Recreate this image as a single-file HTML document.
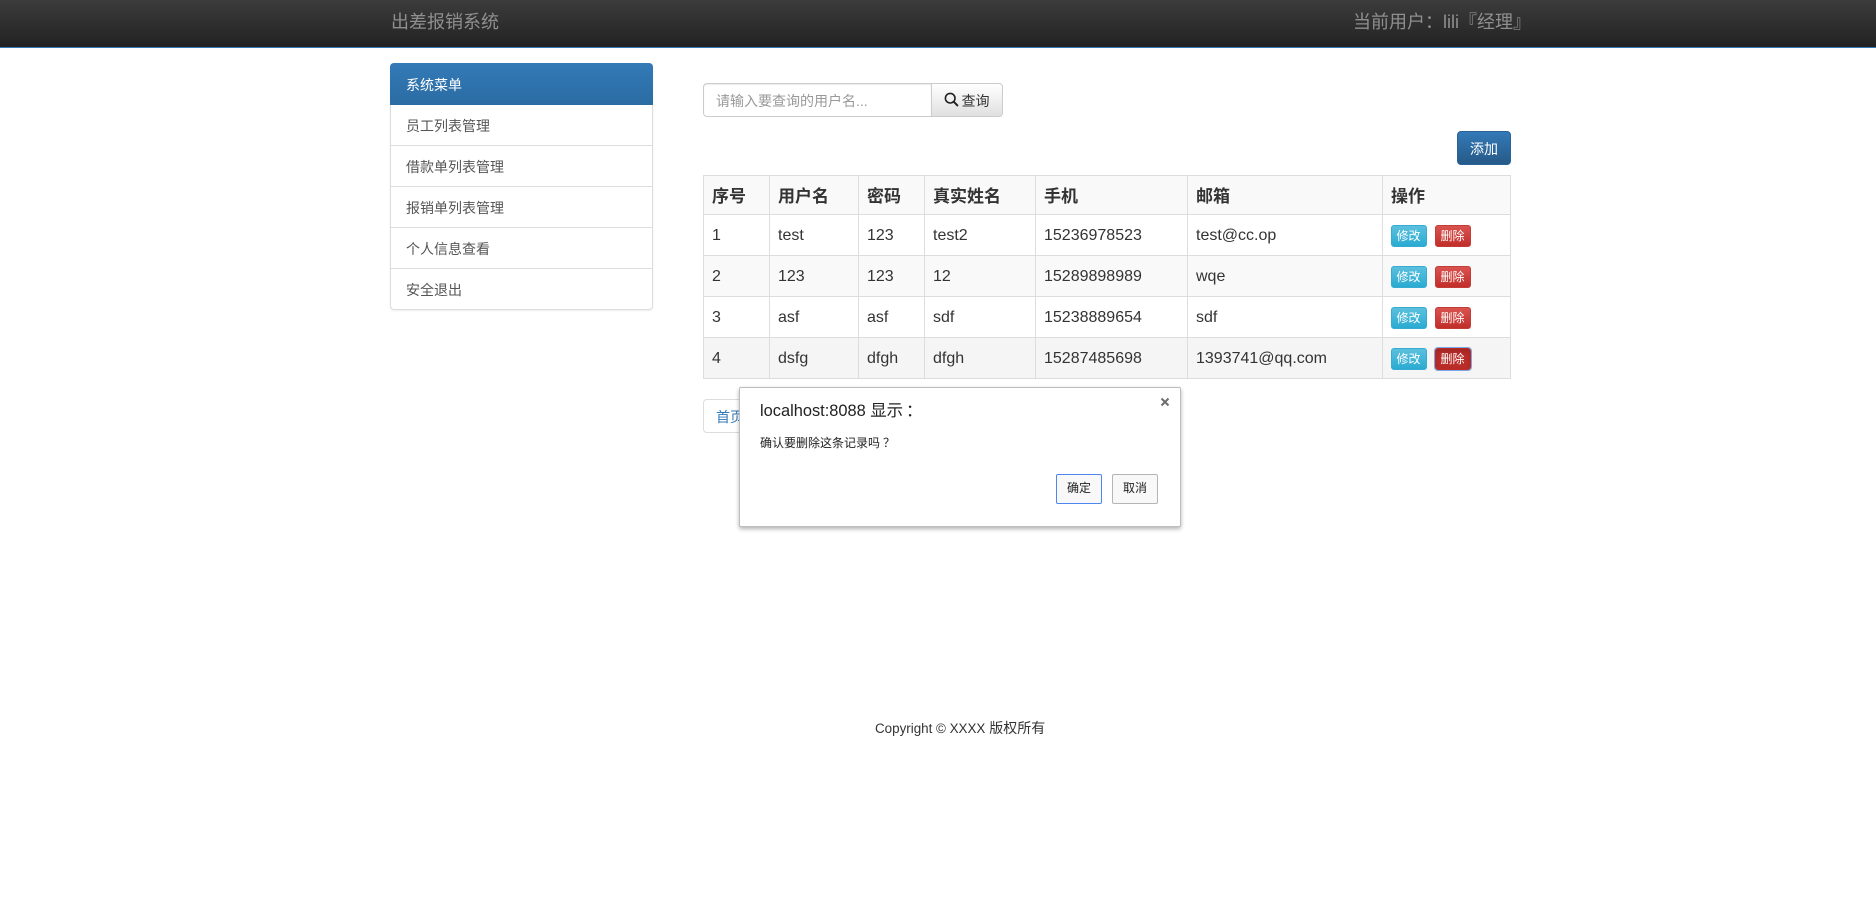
<!DOCTYPE html>
<html lang="zh-CN">
<head>
<meta charset="utf-8">
<title>出差报销系统</title>
<style>
*{box-sizing:border-box}
html,body{margin:0;padding:0;width:1876px;height:906px;overflow:hidden;background:#fff}
body{position:relative;font-family:"Liberation Sans","WenQuanYi Zen Hei","Noto Sans CJK SC",sans-serif;color:#333;font-size:14px}
.abs{position:absolute;white-space:nowrap}
.tc{font-family:"Noto Sans CJK TC",sans-serif;line-height:1}
#nav{position:absolute;left:0;top:0;width:1876px;height:48px;background:linear-gradient(to bottom,#3c3c3c,#222);border-bottom:1px solid #337ab7}
#nav span.x{position:absolute;top:0;line-height:44px;color:#8f8f8f;white-space:nowrap;font-size:18px}
#panel{position:absolute;left:390px;top:63px;width:263px;height:247px;border:1px solid #ddd;border-radius:4px;box-shadow:0 1px 2px rgba(0,0,0,.075);background:#fff}
#panel .h{position:absolute;left:-1px;top:-1px;width:263px;height:42px;background:linear-gradient(to bottom,#337ab7,#2b6ca3);border-radius:4px 4px 0 0;color:#fff;line-height:44px;padding-left:16px}
#panel .i{position:absolute;left:0;width:261px;height:41px;border-bottom:1px solid #ddd;line-height:42px;padding-left:15px;color:#555}
#panel .i:last-child{border-bottom:0}
#search{position:absolute;left:703px;top:83px;width:229px;height:34px;border:1px solid #ccc;border-radius:4px 0 0 4px;padding-left:12px;line-height:34px;color:#999;box-shadow:inset 0 1px 1px rgba(0,0,0,.075);background:#fff}
#sbtn{position:absolute;left:931px;top:83px;width:72px;height:34px;border:1px solid #ccc;border-radius:0 4px 4px 0;background:linear-gradient(to bottom,#fff,#e0e0e0);line-height:34px;color:#333}
#add{position:absolute;left:1457px;top:131px;width:54px;height:34px;border:1px solid #2b6396;border-radius:4px;background:linear-gradient(to bottom,#337ab7,#265a88);color:#fff;text-align:center;line-height:34px}
table{position:absolute;left:703px;top:175px;width:807px;border-collapse:collapse;table-layout:fixed;font-size:16px}
th,td{border:1px solid #ddd;padding:0 0 0 8px;text-align:left;vertical-align:middle;white-space:nowrap}
th{font-weight:bold;background:#f9f9f9;height:39px;font-size:17px;padding-bottom:2px}
td{height:41px;padding-top:2px}
td:last-child{padding-left:7.5px;padding-top:2px}
tr.s td{background:#f9f9f9}
tr.v td{background:#f5f5f5}
.b{display:inline-block;width:36px;height:22px;border-radius:3px;color:#fff;font-size:12px;line-height:20px;text-align:center;position:relative;top:0;vertical-align:middle}
.e{background:linear-gradient(to bottom,#5bc0de,#2aabd2);border:1px solid #38acd0;margin-right:8px}
.d{background:linear-gradient(to bottom,#d9534f,#c12e2a);border:1px solid #c23c38}
.f{background:#b92c28;border:1px solid #b92c28;outline:1px solid #7aa7e8;box-shadow:inset 0 3px 5px rgba(0,0,0,.125)}
#page{position:absolute;left:703px;top:399px;width:60px;height:34px;border:1px solid #ddd;border-radius:4px 0 0 4px;background:#fff;color:#337ab7;padding-left:12px;line-height:34px}
#dlg{position:absolute;left:739px;top:387px;width:442px;height:140px;background:#fff;border:1px solid #bdbdbd;border-radius:2px;box-shadow:0 2px 4px rgba(0,0,0,.3)}
#dlg .t{position:absolute;left:20px;top:12px;line-height:23px;font-size:16.4px;color:#222;white-space:nowrap;font-family:"Liberation Sans","Noto Sans CJK SC",sans-serif}
#dlg .m{position:absolute;left:20px;top:46px;line-height:18px;font-size:12px;color:#222;white-space:nowrap;font-family:"Liberation Sans","Noto Sans CJK SC",sans-serif}
#dlg .o{position:absolute;top:86px;width:46px;height:30px;border-radius:2px;background:#f8f8f8;text-align:center;font-size:12px;line-height:27px;color:#222;font-family:"Liberation Sans","Noto Sans CJK SC",sans-serif}
#dlg .p{position:relative}
#foot{position:absolute;left:875px;top:718px;line-height:20px;white-space:nowrap;color:#333}
</style>
</head>
<body>
<div id="nav">
  <span class="x" style="left:391px">出差报销系统</span>
  <span class="x" style="left:1353px">当前用户<span class="tc">：</span>lili『经理』</span>
</div>

<div id="panel">
  <div class="h">系统菜单</div>
  <div class="i" style="top:41px">员工列表管理</div>
  <div class="i" style="top:82px">借款单列表管理</div>
  <div class="i" style="top:123px">报销单列表管理</div>
  <div class="i" style="top:164px">个人信息查看</div>
  <div class="i" style="top:205px">安全退出</div>
</div>

<div id="search">请输入要查询的用户名...</div>
<div id="sbtn">
  <svg style="position:absolute;left:12px;top:8px" width="15" height="15" viewBox="0 0 15 15"><circle cx="6.2" cy="6.2" r="4.8" fill="none" stroke="#222" stroke-width="1.6"/><path d="M9.8 9.8 L13.4 13.4" stroke="#222" stroke-width="2" stroke-linecap="round"/></svg>
  <span class="abs" style="left:29.5px;top:0">查询</span>
</div>
<div id="add">添加</div>

<table>
  <colgroup><col style="width:66px"><col style="width:89px"><col style="width:66px"><col style="width:111px"><col style="width:152px"><col style="width:195px"><col style="width:128px"></colgroup>
  <tr><th>序号</th><th>用户名</th><th>密码</th><th>真实姓名</th><th>手机</th><th>邮箱</th><th>操作</th></tr>
  <tr><td>1</td><td>test</td><td>123</td><td>test2</td><td>15236978523</td><td>test@cc.op</td><td><span class="b e">修改</span><span class="b d">删除</span></td></tr>
  <tr class="s"><td>2</td><td>123</td><td>123</td><td>12</td><td>15289898989</td><td>wqe</td><td><span class="b e">修改</span><span class="b d">删除</span></td></tr>
  <tr><td>3</td><td>asf</td><td>asf</td><td>sdf</td><td>15238889654</td><td>sdf</td><td><span class="b e">修改</span><span class="b d">删除</span></td></tr>
  <tr class="v"><td>4</td><td>dsfg</td><td>dfgh</td><td>dfgh</td><td>15287485698</td><td>1393741@qq.com</td><td><span class="b e">修改</span><span class="b f">删除</span></td></tr>
</table>

<div id="page">首页</div>

<div id="dlg">
  <div class="t">localhost:8088 显示<span class="tc p" style="left:3px">：</span></div>
  <div class="m">确认要删除这条记录吗<span class="tc p" style="left:3px">？</span></div>
  <svg style="position:absolute;left:420px;top:9px" width="10" height="10" viewBox="0 0 10 10"><path d="M1.5 1.5 L8.5 8.5 M8.5 1.5 L1.5 8.5" stroke="#6e6e6e" stroke-width="2"/></svg>
  <div class="o" style="left:316px;border:1px solid #4d86f0">确定</div>
  <div class="o" style="left:372px;border:1px solid #b5b5b5">取消</div>
</div>

<div id="foot"><span style="font-size:13.4px">Copyright © XXXX</span> 版权所有</div>
</body>
</html>
